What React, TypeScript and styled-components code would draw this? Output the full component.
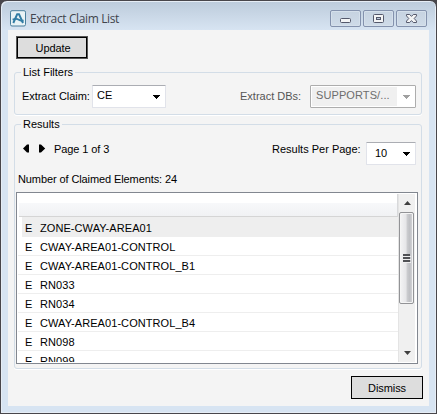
import React from "react";
import styled, { createGlobalStyle } from "styled-components";

const GlobalStyle = createGlobalStyle`
  * { box-sizing: border-box; }
  body { margin: 0; background: #48464b; overflow: hidden; }
`;

const Window = styled.div`
  width: 437px;
  height: 414px;
  display: flex;
  flex-direction: column;
  padding: 0 7px 7px;
  border: 1px solid #48464b;
  border-radius: 7px 7px 0 0;
  background: linear-gradient(#bccbdb 0, #d7e4f2 29px, #d7e4f2 100%);
  box-shadow: inset 1px 1px 0 #e6edf5, inset -1px -1px 0 #e6edf5;
  font: 11px/14px "Liberation Sans", Arial, sans-serif;
  color: #000;
  white-space: nowrap;
`;

const TitleBar = styled.header`
  height: 29px;
  flex: none;
  display: flex;
  align-items: flex-start;
  padding: 9px 2px 0 2px;
`;

const Title = styled.h1`
  flex: 1;
  margin: 0 0 0 3px;
  font: 12px/17px "Open Sans", "Noto Sans", sans-serif;
  letter-spacing: -0.38px;
  color: #41444d;
`;

const Controls = styled.div`
  display: flex;
  gap: 2px;
`;

const ControlButton = styled.button`
  width: 31px;
  height: 17px;
  padding: 0;
  border: 1px solid #8492ad;
  border-radius: 2px;
  background: linear-gradient(#c6d3e1, #cfdbe8);
  box-shadow: inset 0 0 0 1px #d5e0eb;
  svg { display: block; }
`;

const Client = styled.main`
  flex: 1;
  display: flex;
  flex-direction: column;
  padding: 6px 6px 0;
  background: #f4f4f4;
`;

const PushButton = styled.button<{ $end?: boolean }>`
  flex: none;
  width: 72px;
  height: 23px;
  margin: ${(p) => (p.$end ? "7px 0 0 0" : "0 0 0 2px")};
  align-self: ${(p) => (p.$end ? "flex-end" : "flex-start")};
  padding: 0 0 0 ${(p) => (p.$end ? 0 : 2)}px;
  border: 1px solid ${(p) => (p.$end ? "#000" : "#555")};
  box-shadow: ${(p) => (p.$end ? "none" : "inset 0 0 0 1px #000")};
  background: #dddddd;
  font: inherit;
  letter-spacing: ${(p) => (p.$end ? "-0.08px" : "-0.1px")};
  color: #000;
`;

const Group = styled.fieldset<{ $height: number; $top: number }>`
  flex: none;
  display: flex;
  flex-direction: column;
  width: 408px;
  height: ${(p) => p.$height}px;
  margin: ${(p) => p.$top}px 0 0;
  padding: 0 0 0 1px;
  min-width: 0;
  border: 1px solid #d3dde7;
  border-radius: 3px;
  box-shadow: 0 1px 0 #fff;
`;

const Legend = styled.legend`
  height: 14px;
  margin-left: 5px;
  padding: 0 2px;
`;

const Row = styled.div<{ $top: number; $left: number }>`
  display: flex;
  align-items: flex-start;
  margin: ${(p) => p.$top}px 0 0 ${(p) => p.$left}px;
`;

const Label = styled.span<{ $w?: number; $top?: number; $track?: number; $muted?: boolean }>`
  width: ${(p) => (p.$w ? `${p.$w}px` : "auto")};
  margin-top: ${(p) => p.$top ?? 0}px;
  letter-spacing: ${(p) => p.$track ?? 0}px;
  color: ${(p) => (p.$muted ? "#555" : "#000")};
`;

const Spacer = styled.div`
  flex: 1;
`;

const Combo = styled.div<{ $w: number; $off?: boolean; $pad?: number; $end?: number }>`
  display: flex;
  align-items: center;
  width: ${(p) => p.$w}px;
  height: 23px;
  margin-right: ${(p) => p.$end ?? 0}px;
  padding: 1px 4px 1px ${(p) => p.$pad ?? 4}px;
  border: 1px solid ${(p) => (p.$off ? "#adadad" : "#e1e3ea")};
  border-top-color: ${(p) => (p.$off ? "#adadad" : "#abadb3")};
  border-radius: 1px;
  background: #fff;
  color: ${(p) => (p.$off ? "#6d6d6d" : "#000")};
  svg { flex: none; }
`;

const ComboText = styled.span<{ $off?: boolean; $drop?: number }>`
  flex: 1;
  height: 19px;
  padding-left: ${(p) => (p.$off ? 4 : 0)}px;
  margin-right: ${(p) => (p.$off ? 6 : 0)}px;
  line-height: ${(p) => 17 + (p.$drop ?? 0)}px;
  letter-spacing: ${(p) => (p.$off ? "0.1px" : "0")};
  background: ${(p) => (p.$off ? "#f0f0f0" : "transparent")};
`;

const List = styled.div`
  display: flex;
  width: 402px;
  height: 172px;
  margin: 6px 0 0;
  padding: 1px;
  border: 1px solid #828790;
  background: #fff;
  overflow: hidden;
`;

const Rows = styled.div`
  flex: 1;
  overflow: hidden;
`;

const ListHeader = styled.div`
  height: 23px;
  margin-left: 1px;
  border-right: 1px solid #d8d9db;
  border-bottom: 1px solid #d5d5d5;
  background: linear-gradient(#fff 0, #fff 9px, #f7f8fa 9px, #f1f2f4 100%);
`;

const Item = styled.div<{ $selected?: boolean }>`
  display: flex;
  height: ${(p) => (p.$selected ? 20 : 19)}px;
  margin-left: ${(p) => (p.$selected ? 4 : 0)}px;
  padding: ${(p) => (p.$selected ? "4px 0 0 3px" : "3px 0 0 7px")};
  border-bottom: 1px solid #eeeeee;
  background: ${(p) => (p.$selected ? "#eeeeee" : "#fff")};
  letter-spacing: 0.07px;
`;

const Kind = styled.span`
  width: 15px;
`;

const ScrollBar = styled.div`
  display: flex;
  flex-direction: column;
  width: 17px;
  margin-right: 1px;
  border-left: 1px solid #e4e4e4;
  background: #f0f0f0;
`;

const ScrollArrow = styled.div`
  height: 18px;
  display: flex;
  align-items: center;
  justify-content: center;
`;

const Thumb = styled.div`
  width: 15px;
  height: 92px;
  display: flex;
  align-items: center;
  justify-content: center;
  border: 1px solid #929396;
  border-radius: 2px;
  box-shadow: inset 0 0 0 1px #f5f5f5;
  background: linear-gradient(90deg, #f4f4f5 0, #e6e6e8 45%, #c9cacd 58%, #bfc0c4 75%, #dadadd 100%);
`;

const DownArrow = ({ color = "#000" }: { color?: string }) => (
  <svg width="8" height="5" shapeRendering="crispEdges">
    <path d="M0 1H7V2H6V3H5V4H4V5H3V4H2V3H1V2H0Z" fill={color} />
  </svg>
);

const AppIcon = () => (
  <svg width="17" height="17" viewBox="0 0 17 17">
    <rect x=".5" y=".7" width="15" height="15.3" rx="1.5" fill="#e9f3f6" stroke="#4a7f9d" />
    <path d="M3.3 13 L7.2 4.2 H9 L13 13" fill="none" stroke="#327da5" strokeWidth="2" />
    <path d="M2.6 9.6 Q6.5 8.2 8.8 9.8 T13.6 10.4" fill="none" stroke="#327da5" strokeWidth="1.8" />
  </svg>
);

const MinimizeIcon = () => (
  <svg width="29" height="15">
    <rect x="9.5" y="7.5" width="10" height="4" rx="1" fill="#f3f4f5" stroke="#54586b" />
  </svg>
);

const MaximizeIcon = () => (
  <svg width="29" height="15">
    <rect x="9.5" y="3.5" width="10" height="8" rx="1" fill="#f3f4f5" stroke="#54586b" />
    <rect x="12.5" y="6.5" width="4" height="2" fill="#bdcbdc" stroke="#54586b" />
  </svg>
);

const CloseIcon = () => (
  <svg width="29" height="15">
    <path
      d="M9.5 3.5H12.7L14.5 5.4L16.3 3.5H19.5V4.9L17.2 7.5L19.5 10.1V11.5H16.3L14.5 9.6L12.7 11.5H9.5V10.1L11.8 7.5L9.5 4.9Z"
      fill="#f3f4f5"
      stroke="#54586b"
    />
  </svg>
);

const PagerIcon = () => (
  <svg width="23" height="9" viewBox="0 0 23 9">
    <path d="M0 4.5L4 .5H6V8.5H4ZM16 .5H18L22.2 4.5L18 8.5H16Z" fill="#000" />
  </svg>
);

const GripIcon = () => (
  <svg width="8" height="9" shapeRendering="crispEdges">
    <path d="M0 1H7M0 4H7M0 7H7" stroke="#505155" strokeWidth="2" />
    <path d="M0 2.5H8M0 5.5H8M0 8.5H8" stroke="#eeeeef" />
  </svg>
);

const ScrollTriangle = ({ up }: { up?: boolean }) => (
  <svg width="7" height="4">
    <path d={up ? "M0 4L3.5 0L7 4Z" : "M0 0L3.5 4L7 0Z"} fill="#404040" />
  </svg>
);

const elements = [
  "ZONE-CWAY-AREA01",
  "CWAY-AREA01-CONTROL",
  "CWAY-AREA01-CONTROL_B1",
  "RN033",
  "RN034",
  "CWAY-AREA01-CONTROL_B4",
  "RN098",
  "RN099",
];

export default function App() {
  return (
    <>
      <GlobalStyle />
      <Window>
        <TitleBar>
          <AppIcon />
          <Title>Extract Claim List</Title>
          <Controls>
            <ControlButton aria-label="Minimize"><MinimizeIcon /></ControlButton>
            <ControlButton aria-label="Maximize"><MaximizeIcon /></ControlButton>
            <ControlButton aria-label="Close"><CloseIcon /></ControlButton>
          </Controls>
        </TitleBar>
        <Client>
          <PushButton>Update</PushButton>
          <Group $height={50} $top={6}>
            <Legend>List Filters</Legend>
            <Row $top={6} $left={6}>
              <Label $w={70} $top={4} $track={-0.05}>Extract Claim:</Label>
              <Combo $w={74}>
                <ComboText>CE</ComboText>
                <DownArrow />
              </Combo>
              <Spacer />
              <Label $w={70} $top={4} $muted>Extract DBs:</Label>
              <Combo $w={106} $off $pad={1} $end={5}>
                <ComboText $off>SUPPORTS/...</ComboText>
                <DownArrow color="#a0a0a0" />
              </Combo>
            </Row>
          </Group>
          <Group $height={252} $top={2}>
            <Legend>Results</Legend>
            <Row $top={11} $left={7}>
              <Row $top={2} $left={0}><PagerIcon /></Row>
              <Row $top={0} $left={8}><Label $track={-0.1}>Page 1 of 3</Label></Row>
              <Spacer />
              <Label $w={94}>Results Per Page:</Label>
              <Combo $w={50} $pad={8} $end={5}>
                <ComboText $drop={1}>10</ComboText>
                <DownArrow />
              </Combo>
            </Row>
            <Row $top={7} $left={2}><Label $track={-0.1}>Number of Claimed Elements: 24</Label></Row>
            <List>
              <Rows>
                <ListHeader />
                {elements.map((name, i) => (
                  <Item key={name} $selected={i === 0}>
                    <Kind>E</Kind>
                    <span>{name}</span>
                  </Item>
                ))}
              </Rows>
              <ScrollBar>
                <ScrollArrow><ScrollTriangle up /></ScrollArrow>
                <Thumb><GripIcon /></Thumb>
                <Spacer />
                <ScrollArrow><ScrollTriangle /></ScrollArrow>
              </ScrollBar>
            </List>
          </Group>
          <PushButton $end>Dismiss</PushButton>
        </Client>
      </Window>
    </>
  );
}
